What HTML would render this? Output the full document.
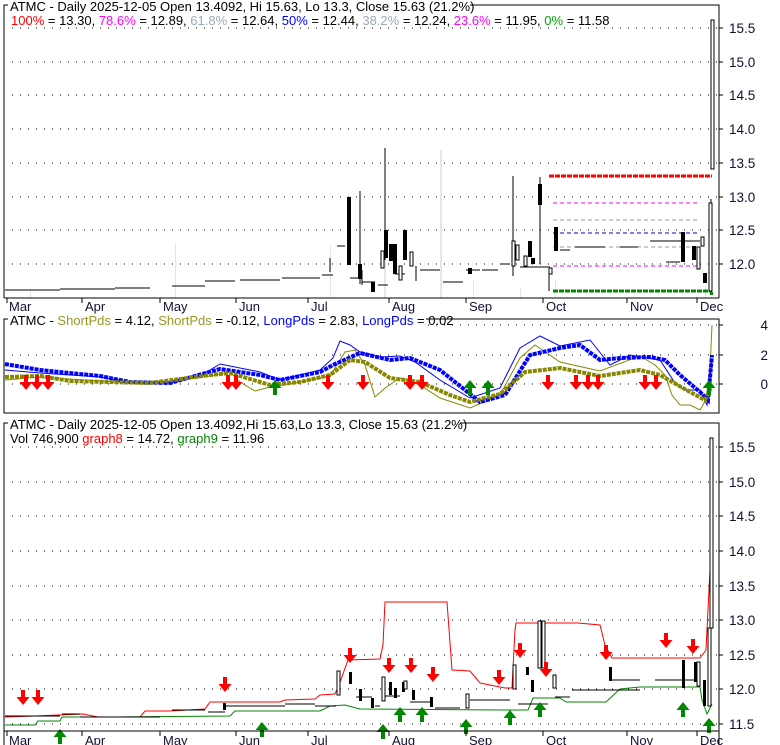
<!DOCTYPE html>
<html><head><meta charset="utf-8"><style>
body{margin:0;background:#fff;}
svg{display:block;font-family:"Liberation Sans",sans-serif;}
</style></head><body>
<svg width="780" height="745" viewBox="0 0 780 745" xmlns="http://www.w3.org/2000/svg">
<defs>
<g id="dn"><path d="M-2 -11h4v7h4.5l-6.5 8-6.5-8h4.5z" fill="#f00"/></g>
<g id="up"><path d="M-2 11h4v-7h4.5l-6.5-8-6.5 8h4.5z" fill="#080"/></g>
</defs>
<!-- ===== Panel 1 ===== -->
<g fill="#e6e6e6">
<rect x="30" y="290" width="1" height="8"/><rect x="175" y="243" width="1" height="55"/><rect x="330" y="246" width="1" height="52"/><rect x="384" y="250" width="2" height="48"/><rect x="440" y="150" width="2" height="148"/><rect x="473" y="280" width="1" height="18"/><rect x="520" y="288" width="1" height="10"/><rect x="555" y="280" width="1" height="18"/><rect x="705" y="285" width="1" height="13"/>
</g>
<g stroke="#000" stroke-width="1" stroke-dasharray="1,7">
<line x1="12" y1="28" x2="719" y2="28"/><line x1="12" y1="62" x2="719" y2="62"/><line x1="12" y1="95" x2="719" y2="95"/><line x1="12" y1="129" x2="719" y2="129"/><line x1="12" y1="163" x2="719" y2="163"/><line x1="12" y1="197" x2="719" y2="197"/><line x1="12" y1="230" x2="719" y2="230"/><line x1="12" y1="264" x2="719" y2="264"/>
</g>
<line x1="549" y1="176" x2="712" y2="176" stroke="#f00" stroke-width="3" stroke-dasharray="5,1"/>
<line x1="553" y1="203" x2="700" y2="203" stroke="#f0f" stroke-width="1" stroke-dasharray="4,3"/>
<line x1="553" y1="220" x2="700" y2="220" stroke="#999" stroke-width="1" stroke-dasharray="4,3"/>
<line x1="553" y1="233" x2="700" y2="233" stroke="#00c" stroke-width="1" stroke-dasharray="4,3"/>
<line x1="553" y1="247" x2="700" y2="247" stroke="#999" stroke-width="1" stroke-dasharray="4,3"/>
<line x1="553" y1="266" x2="700" y2="266" stroke="#f0f" stroke-width="1" stroke-dasharray="4,3"/>
<line x1="553" y1="291" x2="712" y2="291" stroke="#080" stroke-width="3" stroke-dasharray="5,1"/>
<g stroke="#000" stroke-width="1" fill="none">
<path d="M5 290H60M60 289H115M115 288H150M172 286H205M205 281H235M240 280H280M282 278H320M322 275H333"/>
<path d="M337 246H345M350 278H360M362 282H375M378 285H388M395 274H405M420 270H440M443 282H463M466 270H480M482 270H498M500 264H510M520 267H548"/>
<path d="M560 250H570M575 247H605M620 247H638M650 241H700M666 262H680"/>
<path d="M360 191V284M385 148V260M416 266V281M330 258V272M362 270V285M513 176V276M540 177V264M549 266V291"/>
<path d="M711 199V290"/>
</g>
<g fill="#000">
<rect x="347" y="197" width="4" height="68"/><rect x="358" y="264" width="4" height="15"/><rect x="371" y="282" width="4" height="10"/><rect x="384" y="230" width="4" height="28"/><rect x="389" y="244" width="4" height="17"/><rect x="393" y="244" width="4" height="30"/><rect x="403" y="230" width="4" height="30"/><rect x="468" y="268" width="4" height="6"/><rect x="528" y="241" width="4" height="16"/><rect x="531" y="258" width="4" height="6"/><rect x="538" y="184" width="4" height="21"/><rect x="554" y="227" width="4" height="24"/><rect x="681" y="232" width="4" height="30"/><rect x="692" y="246" width="4" height="14"/><rect x="703" y="273" width="4" height="10"/>
</g>
<g fill="#fff" stroke="#000">
<rect x="381" y="251" width="3" height="17"/><rect x="399" y="266" width="3" height="14"/><rect x="410" y="252" width="3" height="14"/><rect x="512" y="241" width="3" height="25"/><rect x="516" y="245" width="3" height="15"/><rect x="524" y="256" width="3" height="10"/><rect x="549" y="268" width="3" height="6"/><rect x="697" y="247" width="3" height="22"/><rect x="701" y="237" width="3" height="9"/><rect x="709" y="203" width="3" height="88"/><rect x="711" y="20" width="3" height="149"/>
</g>
<rect x="710" y="292" width="3" height="3" fill="#080"/>
<path d="M4 298V5H719V298" fill="none" stroke="#000"/>
<g stroke="#000"><line x1="719" y1="28" x2="723" y2="28"/><line x1="719" y1="62" x2="723" y2="62"/><line x1="719" y1="95" x2="723" y2="95"/><line x1="719" y1="129" x2="723" y2="129"/><line x1="719" y1="163" x2="723" y2="163"/><line x1="719" y1="197" x2="723" y2="197"/><line x1="719" y1="230" x2="723" y2="230"/><line x1="719" y1="264" x2="723" y2="264"/></g>
<line x1="4" y1="298" x2="719" y2="298" stroke="#000"/>
<g stroke="#000"><line x1="7" y1="298" x2="7" y2="303"/><line x1="82" y1="298" x2="82" y2="303"/><line x1="160" y1="298" x2="160" y2="303"/><line x1="236" y1="298" x2="236" y2="303"/><line x1="308" y1="298" x2="308" y2="303"/><line x1="389" y1="298" x2="389" y2="303"/><line x1="466" y1="298" x2="466" y2="303"/><line x1="543" y1="298" x2="543" y2="303"/><line x1="627" y1="298" x2="627" y2="303"/><line x1="697" y1="298" x2="697" y2="303"/></g>
<g font-size="13.5" fill="#113">
<text x="729" y="33">15.5</text><text x="729" y="67">15.0</text><text x="729" y="100">14.5</text><text x="729" y="134">14.0</text><text x="729" y="168">13.5</text><text x="729" y="202">13.0</text><text x="729" y="235">12.5</text><text x="729" y="269">12.0</text>
</g>
<g font-size="13" fill="#113">
<text x="9" y="311">Mar</text><text x="85" y="311">Apr</text><text x="163" y="311">May</text><text x="239" y="311">Jun</text><text x="311" y="311">Jul</text><text x="392" y="311">Aug</text><text x="469" y="311">Sep</text><text x="546" y="311">Oct</text><text x="630" y="311">Nov</text><text x="700" y="311">Dec</text>
</g>
<rect x="8" y="0" width="462" height="12" fill="#fff"/>
<text x="10" y="11" font-size="13" fill="#000">ATMC - Daily 2025-12-05 Open 13.4092, Hi 15.63, Lo 13.3, Close 15.63 (21.2%)</text>
<text x="11" y="25" font-size="13"><tspan fill="#f00">100%</tspan> = 13.30, <tspan fill="#f0f">78.6%</tspan> = 12.89, <tspan fill="#9ab">61.8%</tspan> = 12.64, <tspan fill="#00f">50%</tspan> = 12.44, <tspan fill="#9ab">38.2%</tspan> = 12.24, <tspan fill="#f0f">23.6%</tspan> = 11.95, <tspan fill="#0a0">0%</tspan> = 11.58</text>

<!-- ===== Panel 2 ===== -->
<g stroke="#000" stroke-dasharray="1,7"><line x1="12" y1="325" x2="719" y2="325"/><line x1="12" y1="355" x2="719" y2="355"/><line x1="12" y1="384" x2="719" y2="384"/></g>
<polyline fill="none" stroke="#00f" stroke-width="1" points="5,370 40,373 100,377 130,382 170,383 200,376 220,364 260,372 280,380 320,370 333,358 340,341 350,345 360,352 380,357 400,356 415,362 440,380 470,398 500,388 520,348 540,336 560,346 590,340 610,365 630,355 660,360 675,383 685,390 700,390 707,405 712,360"/>
<polyline fill="none" stroke="#880" stroke-width="1" points="5,380 40,377 100,381 150,384 210,376 230,372 240,382 255,391 270,387 300,382 330,376 345,352 355,350 365,365 375,397 385,388 400,378 420,385 440,398 470,408 500,395 520,358 535,345 560,362 600,371 640,356 655,365 665,375 672,395 680,405 690,405 700,410 706,400 710,370 712,325"/>
<polyline fill="none" stroke="#00f" stroke-width="4" stroke-dasharray="4,1" points="5,364 40,370 100,376 130,382 170,383 220,369 260,375 280,380 320,372 333,365 360,353 390,360 410,358 440,370 480,402 505,395 530,355 560,348 580,345 600,360 620,358 650,357 665,360 680,375 700,392 708,400 712,355"/>
<polyline fill="none" stroke="#880" stroke-width="4" stroke-dasharray="4,1" points="5,377 40,376 70,381 150,383 210,375 230,373 270,385 300,382 330,375 350,360 365,362 390,378 420,382 450,395 470,402 500,394 525,372 560,368 580,372 600,376 640,370 660,375 690,392 705,400 712,385"/>
<g>
<use href="#dn" x="26" y="386"/><use href="#dn" x="37" y="386"/><use href="#dn" x="48" y="386"/><use href="#dn" x="228" y="386"/><use href="#dn" x="236" y="386"/><use href="#dn" x="328" y="386"/><use href="#dn" x="363" y="386"/><use href="#dn" x="410" y="386"/><use href="#dn" x="422" y="386"/><use href="#dn" x="548" y="386"/><use href="#dn" x="576" y="386"/><use href="#dn" x="588" y="386"/><use href="#dn" x="598" y="386"/><use href="#dn" x="645" y="386"/><use href="#dn" x="656" y="386"/>
<use href="#up" x="275" y="384"/><use href="#up" x="470" y="384"/><use href="#up" x="488" y="384"/><use href="#up" x="709" y="384"/>
</g>
<rect x="4" y="319" width="715" height="94" fill="none" stroke="#000"/>
<g stroke="#000"><line x1="719" y1="325" x2="723" y2="325"/><line x1="719" y1="355" x2="723" y2="355"/><line x1="719" y1="384" x2="723" y2="384"/></g>
<g font-size="13.5" fill="#113"><text x="768" y="330" text-anchor="end">4</text><text x="768" y="360" text-anchor="end">2</text><text x="768" y="389" text-anchor="end">0</text></g>
<rect x="8" y="314" width="418" height="12" fill="#fff"/>
<text x="10" y="325" font-size="13" fill="#000">ATMC - <tspan fill="#992">ShortPds</tspan> = 4.12, <tspan fill="#992">ShortPds</tspan> = -0.12, <tspan fill="#00f">LongPds</tspan> = 2.83, <tspan fill="#00f">LongPds</tspan> = 0.02</text>

<!-- ===== Panel 3 ===== -->
<g stroke="#000" stroke-dasharray="1,7">
<line x1="12" y1="447" x2="719" y2="447"/><line x1="12" y1="482" x2="719" y2="482"/><line x1="12" y1="516" x2="719" y2="516"/><line x1="12" y1="551" x2="719" y2="551"/><line x1="12" y1="586" x2="719" y2="586"/><line x1="12" y1="620" x2="719" y2="620"/><line x1="12" y1="655" x2="719" y2="655"/><line x1="12" y1="689" x2="719" y2="689"/><line x1="12" y1="724" x2="719" y2="724"/>
</g>
<polyline fill="none" stroke="#f00" points="5,717 35,716 83,714 98,717 140,717 145,711 170,711 205,709 210,702 280,702 285,700 315,699 320,695 335,694 339,685 348,660 380,659 383,645 385,602 447,602 452,670 470,671 480,683 505,688 512,688 515,630 516,623 578,623 600,625 605,645 612,658 700,658 706,650 712,530"/>
<polyline fill="none" stroke="#080" points="5,725 35,725 38,721 60,721 62,717 120,717 230,716 235,711 320,711 330,706 345,705 360,709 500,710 528,710 533,698 560,698 566,702 606,702 620,689 640,687 700,687 702,700 707,714 712,704"/>
<g stroke="#000" fill="none">
<path d="M5 716H60M62 714H80M80 717H160M172 710H205M208 712H225M225 706H285M285 704H315M315 706H336M356 697H372M375 706H380M383 696H400M410 702H430M435 708H460M470 700H510M518 704H548M555 697H570M572 690H640M575 690H600M612 680H640M655 680H700"/>
</g>
<g fill="#000"><rect x="349" y="672" width="3" height="12"/><rect x="359" y="689" width="3" height="12"/><rect x="371" y="698" width="3" height="10"/><rect x="389" y="682" width="3" height="13"/><rect x="394" y="688" width="3" height="10"/><rect x="402" y="682" width="3" height="10"/><rect x="412" y="690" width="3" height="10"/><rect x="430" y="697" width="3" height="10"/><rect x="526" y="667" width="3" height="8"/><rect x="531" y="680" width="3" height="12"/><rect x="223" y="703" width="3" height="7"/><rect x="609" y="667" width="3" height="14"/><rect x="682" y="660" width="3" height="28"/><rect x="694" y="662" width="3" height="20"/><rect x="703" y="680" width="3" height="26"/></g>
<g fill="#fff" stroke="#000"><rect x="337" y="671" width="3" height="24"/><rect x="382" y="677" width="3" height="24"/><rect x="404" y="681" width="3" height="8"/><rect x="466" y="694" width="3" height="14"/><rect x="513" y="665" width="3" height="24"/><rect x="538" y="621" width="3" height="47"/><rect x="542" y="621" width="3" height="47"/><rect x="553" y="675" width="3" height="13"/><rect x="697" y="662" width="3" height="24"/><rect x="708" y="628" width="3" height="78"/><rect x="710" y="438" width="3" height="190"/></g>
<g>
<use href="#dn" x="23" y="701"/><use href="#dn" x="38" y="701"/><use href="#dn" x="225" y="688"/><use href="#dn" x="350" y="659"/><use href="#dn" x="389" y="669"/><use href="#dn" x="411" y="669"/><use href="#dn" x="433" y="678"/><use href="#dn" x="499" y="681"/><use href="#dn" x="520" y="654"/><use href="#dn" x="546" y="673"/><use href="#dn" x="606" y="656"/><use href="#dn" x="666" y="644"/><use href="#dn" x="693" y="650"/>
<use href="#up" x="60" y="733"/><use href="#up" x="262" y="726"/><use href="#up" x="383" y="728"/><use href="#up" x="400" y="711"/><use href="#up" x="422" y="711"/><use href="#up" x="466" y="723"/><use href="#up" x="510" y="714"/><use href="#up" x="540" y="706"/><use href="#up" x="683" y="706"/><use href="#up" x="709" y="722"/>
</g>
<path d="M4 745V423H719V745" fill="none" stroke="#000"/>
<line x1="4" y1="731" x2="719" y2="731" stroke="#000"/>
<g stroke="#000"><line x1="7" y1="731" x2="7" y2="736"/><line x1="82" y1="731" x2="82" y2="736"/><line x1="160" y1="731" x2="160" y2="736"/><line x1="236" y1="731" x2="236" y2="736"/><line x1="308" y1="731" x2="308" y2="736"/><line x1="389" y1="731" x2="389" y2="736"/><line x1="466" y1="731" x2="466" y2="736"/><line x1="543" y1="731" x2="543" y2="736"/><line x1="627" y1="731" x2="627" y2="736"/><line x1="697" y1="731" x2="697" y2="736"/></g>
<g stroke="#000"><line x1="719" y1="447" x2="723" y2="447"/><line x1="719" y1="482" x2="723" y2="482"/><line x1="719" y1="516" x2="723" y2="516"/><line x1="719" y1="551" x2="723" y2="551"/><line x1="719" y1="586" x2="723" y2="586"/><line x1="719" y1="620" x2="723" y2="620"/><line x1="719" y1="655" x2="723" y2="655"/><line x1="719" y1="689" x2="723" y2="689"/><line x1="719" y1="724" x2="723" y2="724"/></g>
<g font-size="13.5" fill="#113">
<text x="729" y="452">15.5</text><text x="729" y="487">15.0</text><text x="729" y="521">14.5</text><text x="729" y="556">14.0</text><text x="729" y="591">13.5</text><text x="729" y="625">13.0</text><text x="729" y="660">12.5</text><text x="729" y="694">12.0</text><text x="729" y="729">11.5</text>
</g>
<g font-size="13" fill="#113">
<text x="9" y="745">Mar</text><text x="85" y="745">Apr</text><text x="163" y="745">May</text><text x="239" y="745">Jun</text><text x="311" y="745">Jul</text><text x="392" y="745">Aug</text><text x="469" y="745">Sep</text><text x="546" y="745">Oct</text><text x="630" y="745">Nov</text><text x="700" y="745">Dec</text>
</g>
<rect x="8" y="418" width="452" height="12" fill="#fff"/>
<text x="10" y="429" font-size="13" fill="#000">ATMC - Daily 2025-12-05 Open 13.4092,Hi 15.63,Lo 13.3, Close 15.63 (21.2%)</text>
<text x="10" y="443" font-size="13" fill="#000">Vol 746,900 <tspan fill="#f00">graph8</tspan> = 14.72, <tspan fill="#080">graph9</tspan> = 11.96</text>
</svg>
</body></html>
